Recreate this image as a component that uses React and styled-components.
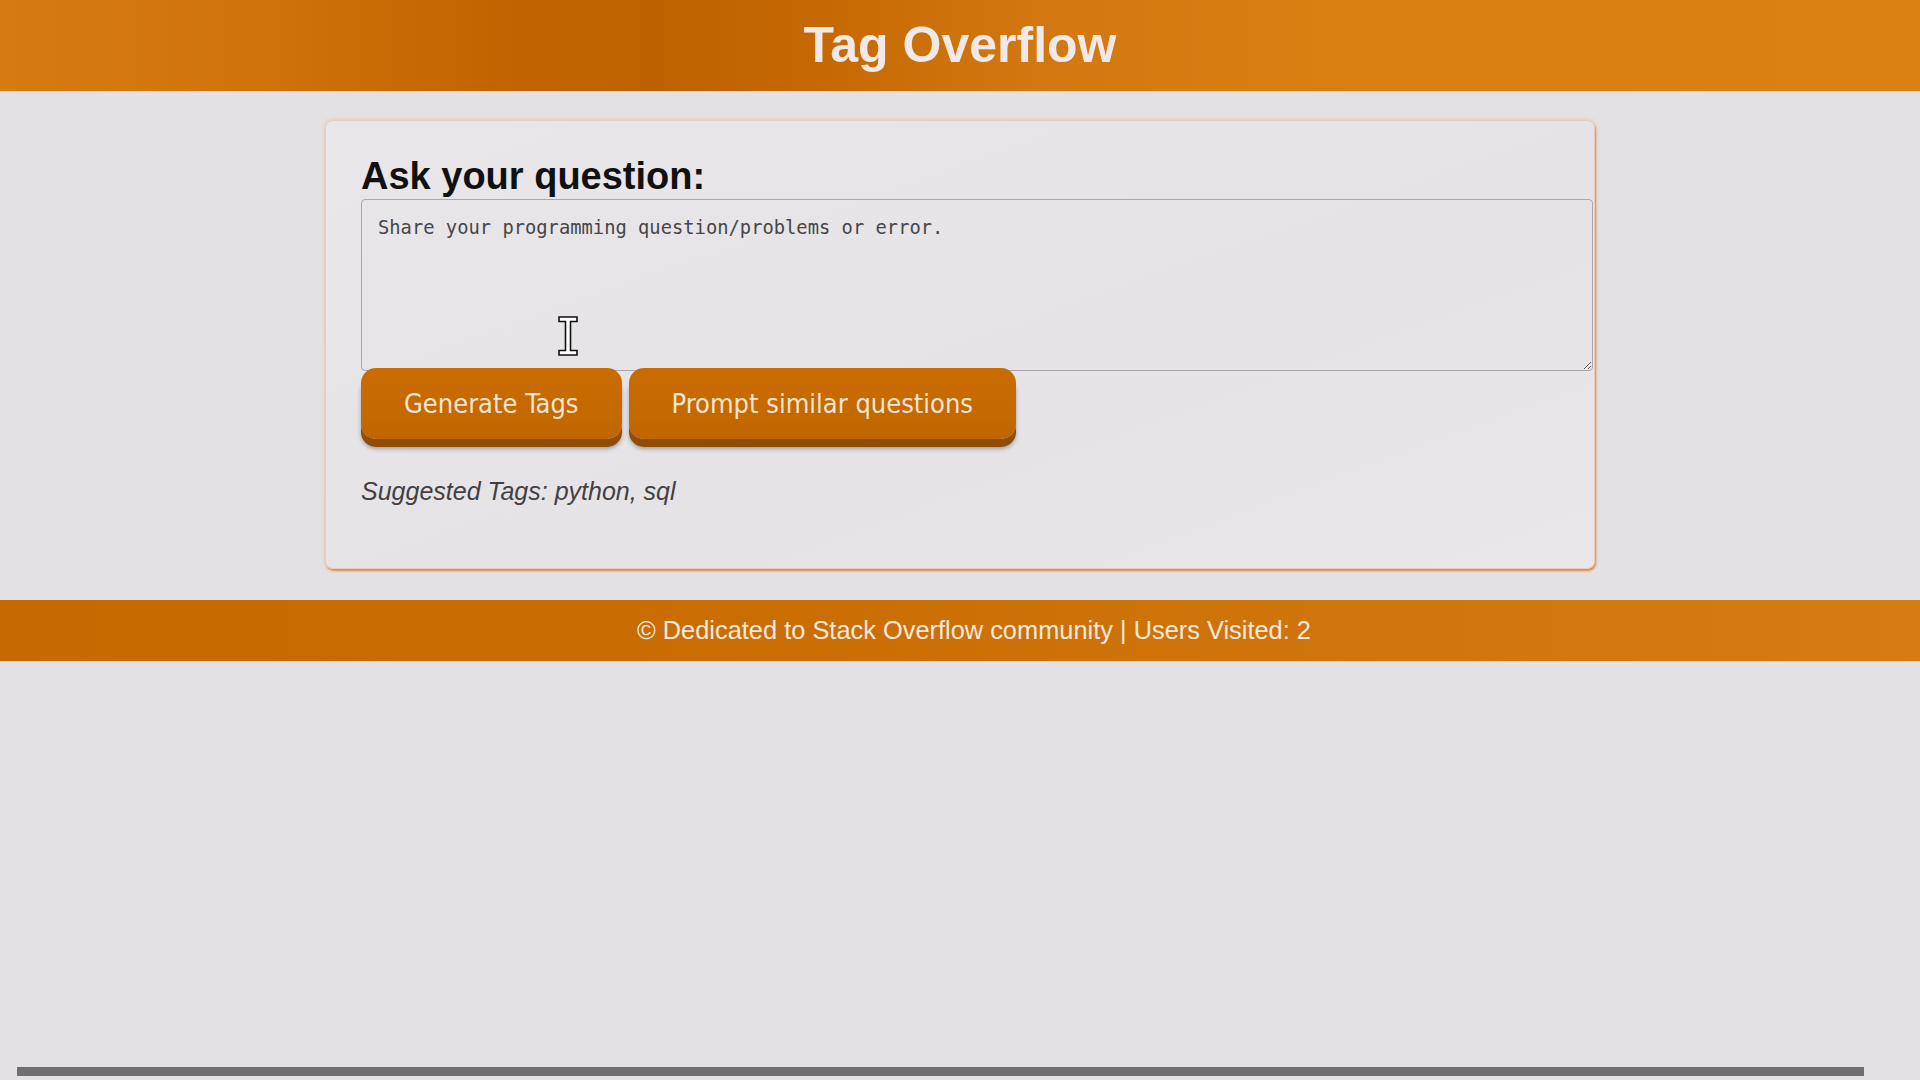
import React from "react";
import styled, { createGlobalStyle } from "styled-components";

const GlobalStyle = createGlobalStyle`
  html, body {
    margin: 0;
    padding: 0;
    background: #e3e1e4;
    font-family: "Liberation Sans", Arial, sans-serif;
  }
`;

const Page = styled.div`
  min-height: 100vh;
  display: flex;
  flex-direction: column;
`;

const Header = styled.header`
  height: 91px;
  box-sizing: border-box;
  padding-bottom: 1px;
  display: flex;
  align-items: center;
  justify-content: center;
  background: linear-gradient(
    90deg,
    #d67b12 0%,
    #cf720a 14%,
    #c26400 26%,
    #bd6100 34%,
    #c76a04 44%,
    #d37810 54%,
    #d87f12 70%,
    #da8113 100%
  );
`;

const Title = styled.h1`
  margin: 0;
  font-size: 50px;
  font-weight: 700;
  color: #f1e9e7;
`;

const Main = styled.main`
  padding-top: 29px;
`;

const Card = styled.section`
  box-sizing: border-box;
  width: 1270px;
  margin: 0 auto;
  padding: 34px 35px 62px;
  background: linear-gradient(160deg, #e8e6e9 0%, #e5e3e6 60%, #e8e6e9 100%);
  border: 1px solid #e6cdbf;
  border-radius: 8px;
  box-shadow: 1px 2px 2px rgba(220, 130, 40, 0.85), 0 0 4px rgba(220, 140, 60, 0.35);
`;

const Heading = styled.h2`
  margin: 0 0 1px;
  font-size: 38px;
  font-weight: 700;
  color: #111;
`;

const Field = styled.div`
  position: relative;
`;

const Question = styled.textarea`
  display: block;
  box-sizing: content-box;
  width: 100%;
  height: 137px;
  margin: 0;
  padding: 17px 16px 16px;
  border: 1px solid #a9a9ab;
  border-radius: 4px;
  background: transparent;
  font-family: "DejaVu Sans Mono", monospace;
  font-size: 18.8px;
  color: #222;
  outline: none;

  &::placeholder {
    color: #474548;
    opacity: 1;
  }
`;

const Cursor = styled.svg`
  position: absolute;
  left: 197px;
  top: 117px;
  width: 20px;
  height: 40px;
  pointer-events: none;
`;

const ButtonRow = styled.div`
  display: flex;
  gap: 7px;
  margin-top: -3px;
  position: relative;
`;

const ActionButton = styled.button`
  height: 71px;
  padding: 0 43px;
  border: none;
  border-radius: 15px;
  background: linear-gradient(180deg, #c86c02 0%, #c46800 70%, #c06500 100%);
  color: #f5e4d2;
  font-family: "DejaVu Sans Condensed", "DejaVu Sans", sans-serif;
  font-stretch: condensed;
  font-size: 27px;
  box-shadow: 0 8px 0 #8f4d08, 0 10px 4px rgba(0, 0, 0, 0.3);
  cursor: pointer;
`;

const Suggested = styled.p`
  margin: 38px 0 0;
  font-size: 25px;
  font-style: italic;
  color: #424043;
`;

const Footer = styled.footer`
  margin-top: 31px;
  height: 61px;
  box-sizing: border-box;
  padding-left: 28px;
  display: flex;
  align-items: center;
  justify-content: center;
  background: linear-gradient(90deg, #c66a00 0%, #ca6e04 40%, #d67c12 100%);
  color: #f3e8df;
  font-size: 25.4px;
`;

const ProgressBar = styled.div`
  margin: auto 56px 4px 17px;
  height: 9px;
  background: #716e72;
`;

export default function App() {
  return (
    <Page>
      <GlobalStyle />
      <Header>
        <Title>Tag Overflow</Title>
      </Header>
      <Main>
        <Card>
          <Heading>Ask your question:</Heading>
          <Field>
            <Question placeholder="Share your programming question/problems or error." />
            <Cursor viewBox="0 0 20 40">
              <path
                d="M1 1 H19 V5.5 H12.5 V34.5 H19 V39 H1 V34.5 H7.5 V5.5 H1 Z"
                fill="#fff"
                stroke="#111"
                strokeWidth="1.6"
                strokeLinejoin="miter"
              />
            </Cursor>
          </Field>
          <ButtonRow>
            <ActionButton>Generate Tags</ActionButton>
            <ActionButton>Prompt similar questions</ActionButton>
          </ButtonRow>
          <Suggested>Suggested Tags: python, sql</Suggested>
        </Card>
      </Main>
      <Footer>© Dedicated to Stack Overflow community | Users Visited: 2</Footer>
      <ProgressBar />
    </Page>
  );
}
